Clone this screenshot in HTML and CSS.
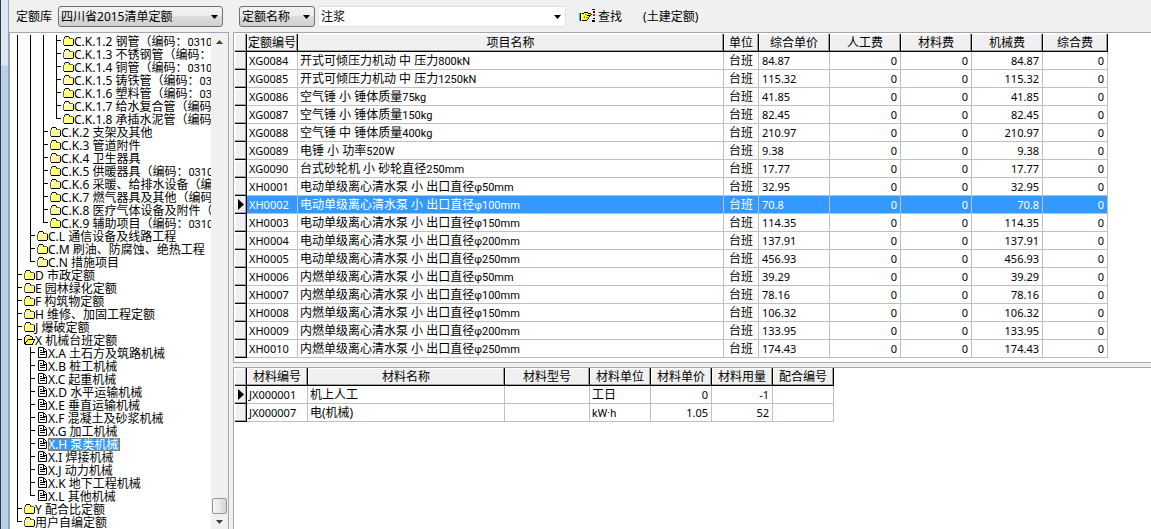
FILE: index.html
```html
<!DOCTYPE html>
<html lang="zh-CN">
<head>
<meta charset="utf-8">
<title>定额查询</title>
<link rel="stylesheet" href="styles.css">
</head>
<body>
<svg class="defs" aria-hidden="true">
  <symbol id="folder" viewBox="0 0 11 11">
    <path d="M1 4h9v6H1zM2 2h4v2H2z" fill="#ffff70"/>
    <path d="M1 4h1v6H1zM2 4h8v1H2zM3 6h1v1H3zM5 6h1v1H5zM7 6h1v1H7zM4 8h1v1H4zM6 8h1v1H6zM8 8h1v1H8z" fill="#ffffd8"/>
    <path d="M0 4h1v6H0zM1 3h1v1H1zM6 3h4v1H6z" fill="#6b6b20"/>
    <path d="M2 1h4v1H2zM1 2h1v1H1zM6 2h1v1H6zM10 4h1v6h-1zM1 10h9v1H1z" fill="#000"/>
  </symbol>
  <symbol id="open" viewBox="0 0 11 11">
    <path d="M1 3h8v7H1z" fill="#ffff50"/>
    <path d="M0 3h1v7H0zM1 2h1v1H1zM2 1h4v1H2zM6 2h2v1H6zM8 3h1v2H8zM4 5h7v1H4zM3 6h1v1H3zM2 7h1v1H2zM1 8h1v2H1zM10 6h1v1h-1zM9 7h1v2H9zM1 10h8v1H1zM8 9h1v1H8z" fill="#000"/>
  </symbol>
  <symbol id="doc" viewBox="0 0 11 11">
    <path d="M1.500 .5h5l3 3v7h-8z" fill="#fff" stroke="#000"/>
    <path d="M6 1h1v3h3v1H6zM3 3h2v1H3zM3 5h5v1H3zM3 7h5v1H3z" fill="#000"/>
  </symbol>
  <symbol id="down" viewBox="0 0 7 4"><path d="M0 0h7L3.500 4z"/></symbol>
</svg>
<div class="edge"></div>
<div class="app">
  <header class="bar">
    <label for="lib">定额库</label>
    <span class="combo lib"><select id="lib"><option>四川省2015清单定额</option></select><svg><use href="#down"/></svg></span>
    <span class="combo field"><select aria-label="查找字段"><option>定额名称</option></select><svg><use href="#down"/></svg></span>
    <span class="combo query"><input type="text" value="注浆" aria-label="查找内容"><svg><use href="#down"/></svg></span>
    <button class="find" type="button">
      <svg width="17" height="14" viewBox="0 0 17 14" aria-hidden="true">
        <path d="M0 4h1v8H0z" fill="#00d8e8"/><path d="M1 4h1v8H1z" fill="#000"/>
        <path d="M3 5h3v-1h3v1h4v1H9v5H4v-1H3z" fill="#ffff20"/>
        <path d="M3 4h2v1H3zM5 3h4v1H5zM9 4h3v1H9zM12 5h1v1h-1zM8 6h4v1H8zM10 7h1v1h-1zM9 9h1v1H9zM8 10h1v1H8zM3 11h5v1H3z" fill="#000"/>
        <path d="M6 5h2v1H6zM7 8h3v1H7zM5 7h1v2H5z" fill="#a09010"/>
        <path d="M13 0h3v1h-3zM14 2h2v2h-2zM14 9h2v1h-2zM13 11h3v2h-3z" fill="#000"/><path d="M14 5h2v2h-2z" fill="#f00"/>
      </svg>查找</button>
    <span class="scope">(土建定额)</span>
  </header>
  <main class="work">
    <nav class="side">
      <ul class="tree">
        <li class="up"><ul>
          <li class="up"><ul>
            <li class="up"><ul>
              <li><svg><use href="#folder"/></svg>C.K.1.2 钢管（编码：<span>0310</span></li>
              <li><svg><use href="#folder"/></svg>C.K.1.3 不锈钢管（编码：</li>
              <li><svg><use href="#folder"/></svg>C.K.1.4 铜管（编码：<span>0310</span></li>
              <li><svg><use href="#folder"/></svg>C.K.1.5 铸铁管（编码：<span>03</span></li>
              <li><svg><use href="#folder"/></svg>C.K.1.6 塑料管（编码：<span>03</span></li>
              <li><svg><use href="#folder"/></svg>C.K.1.7 给水复合管（编码</li>
              <li><svg><use href="#folder"/></svg>C.K.1.8 承插水泥管（编码</li>
            </ul></li>
            <li><svg><use href="#folder"/></svg>C.K.2 支架及其他</li>
            <li><svg><use href="#folder"/></svg>C.K.3 管道附件</li>
            <li><svg><use href="#folder"/></svg>C.K.4 卫生器具</li>
            <li><svg><use href="#folder"/></svg>C.K.5 供暖器具（编码：<span>0310</span></li>
            <li><svg><use href="#folder"/></svg>C.K.6 采暖、给排水设备（编</li>
            <li><svg><use href="#folder"/></svg>C.K.7 燃气器具及其他（编码</li>
            <li><svg><use href="#folder"/></svg>C.K.8 医疗气体设备及附件（</li>
            <li><svg><use href="#folder"/></svg>C.K.9 辅助项目（编码：<span>0310</span></li>
          </ul></li>
          <li><svg><use href="#folder"/></svg>C.L 通信设备及线路工程</li>
          <li><svg><use href="#folder"/></svg>C.M 刷油、防腐蚀、绝热工程</li>
          <li><svg><use href="#folder"/></svg>C.N 措施项目</li>
        </ul></li>
        <li><svg><use href="#folder"/></svg>D 市政定额</li>
        <li><svg><use href="#folder"/></svg>E 园林绿化定额</li>
        <li><svg><use href="#folder"/></svg>F 构筑物定额</li>
        <li><svg><use href="#folder"/></svg>H 维修、加固工程定额</li>
        <li><svg><use href="#folder"/></svg>J 爆破定额</li>
        <li><svg><use href="#open"/></svg>X 机械台班定额
          <ul>
            <li><svg><use href="#doc"/></svg>X.A 土石方及筑路机械</li>
            <li><svg><use href="#doc"/></svg>X.B 桩工机械</li>
            <li><svg><use href="#doc"/></svg>X.C 起重机械</li>
            <li><svg><use href="#doc"/></svg>X.D 水平运输机械</li>
            <li><svg><use href="#doc"/></svg>X.E 垂直运输机械</li>
            <li><svg><use href="#doc"/></svg>X.F 混凝土及砂浆机械</li>
            <li><svg><use href="#doc"/></svg>X.G 加工机械</li>
            <li><svg><use href="#doc"/></svg><span class="picked">X.H 泵类机械</span></li>
            <li><svg><use href="#doc"/></svg>X.I 焊接机械</li>
            <li><svg><use href="#doc"/></svg>X.J 动力机械</li>
            <li><svg><use href="#doc"/></svg>X.K 地下工程机械</li>
            <li><svg><use href="#doc"/></svg>X.L 其他机械</li>
          </ul>
        </li>
        <li><svg><use href="#folder"/></svg>Y 配合比定额</li>
        <li><svg><use href="#folder"/></svg>用户自编定额</li>
      </ul>
      <div class="scroll">
        <button type="button" aria-label="向上滚动"><svg class="flip"><use href="#down"/></svg></button>
        <div class="thumb"></div>
        <button type="button" aria-label="向下滚动"><svg><use href="#down"/></svg></button>
      </div>
    </nav>
    <div class="grids">
      <section class="panel">
        <table class="items">
          <colgroup><col class="mark"><col class="code"><col class="name"><col class="unit"><col class="cost"><col class="cost"><col class="cost"><col class="cost"><col class="total"></colgroup>
          <thead><tr><th></th><th>定额编号</th><th>项目名称</th><th>单位</th><th>综合单价</th><th>人工费</th><th>材料费</th><th>机械费</th><th>综合费</th></tr></thead>
          <tbody>
            <tr><th></th><td>XG0084</td><td>开式可倾压力机动 中 压力<span>800kN</span></td><td>台班</td><td>84.87</td><td>0</td><td>0</td><td>84.87</td><td>0</td></tr>
            <tr><th></th><td>XG0085</td><td>开式可倾压力机动 中 压力<span>1250kN</span></td><td>台班</td><td>115.32</td><td>0</td><td>0</td><td>115.32</td><td>0</td></tr>
            <tr><th></th><td>XG0086</td><td>空气锤 小 锤体质量<span>75kg</span></td><td>台班</td><td>41.85</td><td>0</td><td>0</td><td>41.85</td><td>0</td></tr>
            <tr><th></th><td>XG0087</td><td>空气锤 小 锤体质量<span>150kg</span></td><td>台班</td><td>82.45</td><td>0</td><td>0</td><td>82.45</td><td>0</td></tr>
            <tr><th></th><td>XG0088</td><td>空气锤 中 锤体质量<span>400kg</span></td><td>台班</td><td>210.97</td><td>0</td><td>0</td><td>210.97</td><td>0</td></tr>
            <tr><th></th><td>XG0089</td><td>电锤 小 功率<span>520W</span></td><td>台班</td><td>9.38</td><td>0</td><td>0</td><td>9.38</td><td>0</td></tr>
            <tr><th></th><td>XG0090</td><td>台式砂轮机 小 砂轮直径<span>250mm</span></td><td>台班</td><td>17.77</td><td>0</td><td>0</td><td>17.77</td><td>0</td></tr>
            <tr><th></th><td>XH0001</td><td>电动单级离心清水泵 小 出口直径<span>φ50mm</span></td><td>台班</td><td>32.95</td><td>0</td><td>0</td><td>32.95</td><td>0</td></tr>
            <tr class="current"><th><svg viewBox="0 0 6 11"><path d="M0 0l6 5.500L0 11z"/></svg></th><td>XH0002</td><td>电动单级离心清水泵 小 出口直径<span>φ100mm</span></td><td>台班</td><td>70.8</td><td>0</td><td>0</td><td>70.8</td><td>0</td></tr>
            <tr><th></th><td>XH0003</td><td>电动单级离心清水泵 小 出口直径<span>φ150mm</span></td><td>台班</td><td>114.35</td><td>0</td><td>0</td><td>114.35</td><td>0</td></tr>
            <tr><th></th><td>XH0004</td><td>电动单级离心清水泵 小 出口直径<span>φ200mm</span></td><td>台班</td><td>137.91</td><td>0</td><td>0</td><td>137.91</td><td>0</td></tr>
            <tr><th></th><td>XH0005</td><td>电动单级离心清水泵 小 出口直径<span>φ250mm</span></td><td>台班</td><td>456.93</td><td>0</td><td>0</td><td>456.93</td><td>0</td></tr>
            <tr><th></th><td>XH0006</td><td>内燃单级离心清水泵 小 出口直径<span>φ50mm</span></td><td>台班</td><td>39.29</td><td>0</td><td>0</td><td>39.29</td><td>0</td></tr>
            <tr><th></th><td>XH0007</td><td>内燃单级离心清水泵 小 出口直径<span>φ100mm</span></td><td>台班</td><td>78.16</td><td>0</td><td>0</td><td>78.16</td><td>0</td></tr>
            <tr><th></th><td>XH0008</td><td>内燃单级离心清水泵 小 出口直径<span>φ150mm</span></td><td>台班</td><td>106.32</td><td>0</td><td>0</td><td>106.32</td><td>0</td></tr>
            <tr><th></th><td>XH0009</td><td>内燃单级离心清水泵 小 出口直径<span>φ200mm</span></td><td>台班</td><td>133.95</td><td>0</td><td>0</td><td>133.95</td><td>0</td></tr>
            <tr><th></th><td>XH0010</td><td>内燃单级离心清水泵 小 出口直径<span>φ250mm</span></td><td>台班</td><td>174.43</td><td>0</td><td>0</td><td>174.43</td><td>0</td></tr>
          </tbody>
        </table>
      </section>
      <section class="panel rest">
        <table class="parts">
          <colgroup><col class="mark"><col class="pcode"><col class="pname"><col class="model"><col class="pnum"><col class="pnum"><col class="pnum"><col class="pnum"></colgroup>
          <thead><tr><th></th><th>材料编号</th><th>材料名称</th><th>材料型号</th><th>材料单位</th><th>材料单价</th><th>材料用量</th><th>配合编号</th></tr></thead>
          <tbody>
            <tr><th><svg viewBox="0 0 6 11"><path d="M0 0l6 5.500L0 11z"/></svg></th><td>JX000001</td><td>机上人工</td><td></td><td>工日</td><td>0</td><td>-1</td><td></td></tr>
            <tr><th></th><td>JX000007</td><td>电(机械)</td><td></td><td><span>kW·h</span></td><td>1.05</td><td>52</td><td></td></tr>
          </tbody>
        </table>
      </section>
    </div>
  </main>
</div>
</body>
</html>
```
FILE: styles.css
```css
* { box-sizing: border-box; }
html, body { height: 100%; }
body {
  margin: 0;
  display: flex;
  overflow: hidden;
  background: #f0f0f0;
  color: #000;
  font: 12px/13px "Noto Sans", "Noto Sans CJK SC", sans-serif;
}
button, select, input { font: inherit; color: inherit; }
.defs { display: none; }

.edge {
  flex: none;
  width: 9px;
  border-left: 1px solid #303840;
  border-right: 1px solid #a0a0a0;
  background: linear-gradient(#dce8f5 0, #dce8f5 65px, #b7d0ea 66px);
}
.app { flex: 1; min-width: 0; display: flex; flex-direction: column; }

/* toolbar */
.bar { flex: none; height: 32px; display: flex; align-items: center; padding-left: 7px; white-space: nowrap; }
.combo { position: relative; height: 21px; }
.combo svg { position: absolute; right: 5px; top: 9px; width: 7px; height: 4px; pointer-events: none; }
.combo select, .combo input { display: block; width: 100%; height: 100%; margin: 0; padding: 0 3px; border-radius: 3px; }
.combo select {
  appearance: none;
  padding: 0 2px;
  border: 1px solid #707070;
  background: linear-gradient(#f3f3f3, #ebebeb 50%, #dddddd 50%, #cfcfcf);
}
.combo input { border: 1px solid #e2e3ea; background: #fff; border-radius: 1px; padding: 0 2px; }
.lib { width: 165px; margin-left: 6px; }
.field { width: 76px; margin-left: 16px; }
.query { width: 248px; margin-left: 3px; }
.find { display: flex; align-items: center; gap: 2px; margin-left: 13px; padding: 0; border: 0; background: none; }
.scope { margin-left: 21px; }

.work { flex: 1; min-height: 0; display: flex; gap: 4px; }

/* tree */
.side {
  flex: none;
  width: 220px;
  display: flex;
  border: 1px solid #a5a7b0;
  border-bottom: 0;
  background: #fff;
}
.tree { flex: 1; min-width: 0; overflow: hidden; margin: 0; padding: 2px 0 0 7px; list-style: none; }
.tree ul { margin: 0; padding: 0 0 0 6px; list-style: none; }
.tree li { position: relative; padding-left: 7px; white-space: nowrap; }
.tree li::before { content: ""; position: absolute; left: 0; top: 0; bottom: 0; width: 1px; background: #000; }
.tree li:last-child::before { bottom: auto; height: 6px; }
.tree li::after { content: ""; position: absolute; left: 0; top: 5px; width: 5px; height: 1px; background: #000; }
.tree li.up::after { display: none; }
.tree svg { width: 11px; height: 11px; vertical-align: top; }
.tree ul ul svg { margin-right: 0; }
.tree span { font-family: Roboto, "Noto Sans", sans-serif; font-size: 11px; line-height: 11px; }
.tree .picked { display: inline-block; height: 13px; padding-right: 2px; font: inherit; background: #3399ff; color: #fff; outline: 1px dotted #c06a10; outline-offset: -1px; vertical-align: top; }

.scroll { flex: none; width: 17px; display: flex; flex-direction: column; background: #f0f0f0; }
.scroll button { height: 17px; padding: 0; border: 0; background: none; display: grid; place-items: center; }
.scroll button:last-child { height: 15px; }
.scroll svg { width: 7px; height: 4px; fill: #404040; }
.flip { transform: scaleY(-1); }
.thumb {
  width: 15px;
  height: 16px;
  margin: auto 1px 0;
  border: 1px solid #979797;
  border-radius: 2px;
  background: linear-gradient(90deg, #f5f5f5, #e9e9eb 50%, #d3d3d5);
}

/* grids */
.grids { flex: 1; min-width: 0; display: flex; flex-direction: column; gap: 4px; }
.panel { padding: 1px 0 4px 1px; border: 1px solid #a5a7b0; border-right: 0; background: #fff; overflow: hidden; }
.rest { flex: 1; border-bottom: 0; padding-top: 0; }
table { table-layout: fixed; border-collapse: separate; border-spacing: 0; }
.items { width: 873px; }
.parts { width: 599px; }
.mark { width: 12px; }
.code { width: 51px; }
.name { width: 426px; }
.unit { width: 35px; }
.cost { width: 71px; }
.total { width: 65px; }
.pcode { width: 61px; }
.pname { width: 197px; }
.model { width: 85px; }
.pnum { width: 61px; }

th, td { height: 18px; padding: 0 2px; white-space: nowrap; overflow: hidden; line-height: 17px; }
th {
  padding: 0;
  font-weight: normal;
  background: #f0f0f0;
  border-right: 1px solid #000;
  border-bottom: 1px solid #000;
  box-shadow: inset -1px -1px #a0a0a0, inset 1px 1px #fff;
}
td { border-right: 1px solid #c0c0c0; border-bottom: 1px solid #c0c0c0; }
th svg { display: block; width: 6px; height: 11px; margin: 0 auto; }
td:nth-child(2) { font-size: 11px; }
td span { font-family: Roboto, "Noto Sans", sans-serif; font-size: 11px; line-height: 11px; }
.items td:nth-child(n+5) { padding-left: 3px; font-size: 11px; }
.items td:nth-child(4) { text-align: center; padding: 0; }
.items td:nth-child(n+6), .parts td:nth-child(n+6) { padding-right: 3px; text-align: right; font-size: 11px; }
.current td { background: #3399ff; color: #fff; }
```
